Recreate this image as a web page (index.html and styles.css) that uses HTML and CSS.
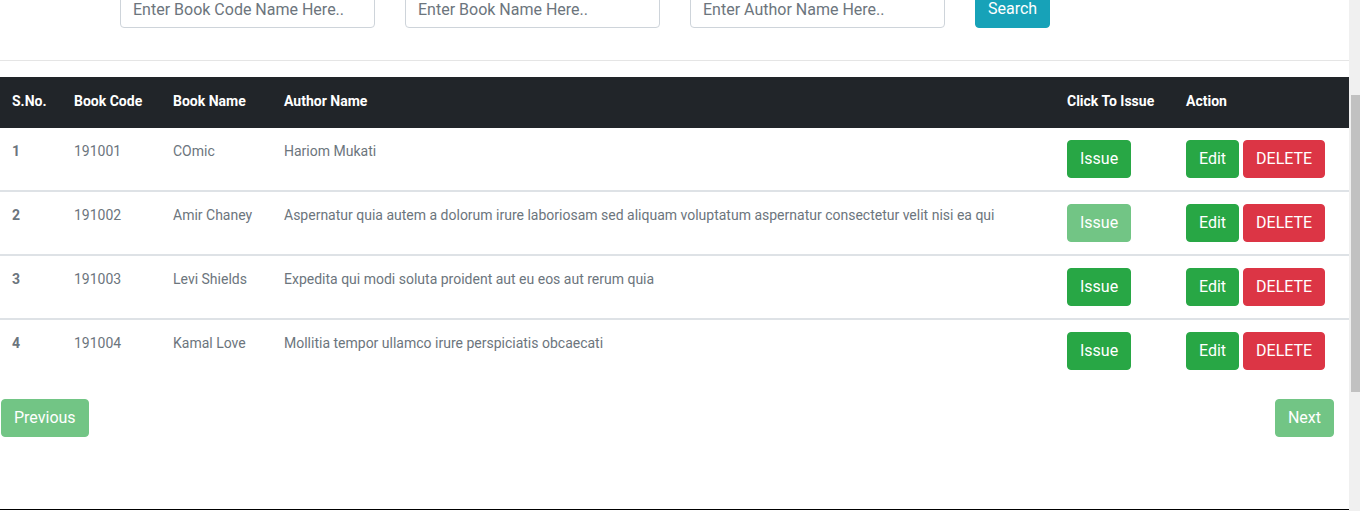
FILE: index.html
```html
<!DOCTYPE html>
<html lang="en">
<head>
<meta charset="utf-8">
<title>Books</title>
<link rel="stylesheet" href="styles.css">
</head>
<body>
<div class="page">
  <main class="main">
    <form class="search-row">
      <input class="form-control" type="text" placeholder="Enter Book Code Name Here..">
      <input class="form-control" type="text" placeholder="Enter Book Name Here..">
      <input class="form-control" type="text" placeholder="Enter Author Name Here..">
      <button class="btn btn-info" type="button">Search</button>
    </form>
    <hr class="divider">
    <table class="books">
      <colgroup>
        <col class="c-sno"><col class="c-code"><col class="c-name"><col class="c-author"><col class="c-issue"><col class="c-action">
      </colgroup>
      <thead>
        <tr>
          <th>S.No.</th><th>Book Code</th><th>Book Name</th><th>Author Name</th><th>Click To Issue</th><th>Action</th>
        </tr>
      </thead>
      <tbody>
        <tr>
          <th>1</th><td>191001</td><td>COmic</td><td>Hariom Mukati</td>
          <td><button class="btn btn-success" type="button">Issue</button></td>
          <td class="actions"><button class="btn btn-success" type="button">Edit</button><button class="btn btn-danger" type="button">DELETE</button></td>
        </tr>
        <tr>
          <th>2</th><td>191002</td><td>Amir Chaney</td><td>Aspernatur quia autem a dolorum irure laboriosam sed aliquam voluptatum aspernatur consectetur velit nisi ea qui</td>
          <td><button class="btn btn-success disabled" type="button">Issue</button></td>
          <td class="actions"><button class="btn btn-success" type="button">Edit</button><button class="btn btn-danger" type="button">DELETE</button></td>
        </tr>
        <tr>
          <th>3</th><td>191003</td><td>Levi Shields</td><td>Expedita qui modi soluta proident aut eu eos aut rerum quia</td>
          <td><button class="btn btn-success" type="button">Issue</button></td>
          <td class="actions"><button class="btn btn-success" type="button">Edit</button><button class="btn btn-danger" type="button">DELETE</button></td>
        </tr>
        <tr>
          <th>4</th><td>191004</td><td>Kamal Love</td><td>Mollitia tempor ullamco irure perspiciatis obcaecati</td>
          <td><button class="btn btn-success" type="button">Issue</button></td>
          <td class="actions"><button class="btn btn-success" type="button">Edit</button><button class="btn btn-danger" type="button">DELETE</button></td>
        </tr>
      </tbody>
    </table>
    <div class="pager">
      <button class="btn btn-success disabled" type="button">Previous</button>
      <button class="btn btn-success disabled" type="button">Next</button>
    </div>
  </main>
  <div class="scrollbar"><div class="thumb"></div></div>
</div>
</body>
</html>
```
FILE: styles.css
```css
* { box-sizing: border-box; }
html, body { margin: 0; padding: 0; background: #fff; }
body {
  font-family: Roboto, "Liberation Sans", Arial, sans-serif;
  font-size: 16px;
  line-height: 1.5;
  color: #212529;
  overflow: hidden;
}
.page {
  display: flex;
  height: 511px;
  overflow: hidden;
}
.main {
  flex: 1;
  height: 510px;
  border-bottom: 1px solid #000;
  overflow: hidden;
}
.scrollbar {
  width: 11px;
  height: 511px;
  background: #f0f0f0;
  padding-top: 95px;
  padding-left: 2px;
}
.thumb {
  width: 9px;
  height: 297px;
  background: #c1c1c1;
}
.search-row {
  display: flex;
  gap: 30px;
  margin: -10px 0 0 0;
  padding-left: 120px;
}
.form-control {
  width: 255px;
  height: 38px;
  padding: 6px 12px;
  font-family: inherit;
  font-size: 16px;
  line-height: 1.5;
  color: #495057;
  background: #fff;
  border: 1px solid #ced4da;
  border-radius: 4px;
  outline: none;
}
.form-control::placeholder { color: #6c757d; opacity: 1; }
.btn {
  display: inline-block;
  vertical-align: top;
  font-family: inherit;
  font-size: 16px;
  line-height: 24px;
  font-weight: 400;
  padding: 6px 12px;
  border: 1px solid transparent;
  border-radius: 4px;
  color: #fff;
  cursor: pointer;
}
.btn-info { background: #17a2b8; border-color: #17a2b8; }
.btn-success { background: #28a745; border-color: #28a745; }
.btn-danger { background: #dc3545; border-color: #dc3545; }
.btn.disabled { opacity: 0.65; }
.divider {
  margin: 32px 0 16px 0;
  border: 0;
  border-top: 1px solid rgba(0,0,0,0.1);
  height: 0;
}
.books {
  width: 100%;
  table-layout: fixed;
  border-collapse: collapse;
  font-size: 14px;
  line-height: 21px;
  color: #6c757d;
}
.c-sno { width: 62px; }
.c-code { width: 99px; }
.c-name { width: 111px; }
.c-author { width: 783px; }
.c-issue { width: 119px; }
.c-action { width: 175px; }
.books thead th {
  background: #212529;
  color: #fff;
  font-weight: 700;
  text-align: left;
  padding: 14px 12px 16px;
  height: 51px;
  white-space: nowrap;
}
.books tbody th, .books tbody td {
  text-align: left;
  vertical-align: top;
  padding: 12px;
  height: 62px;
  line-height: 23px;
}
.books tbody th { font-weight: 700; }
.books tbody tr + tr th, .books tbody tr + tr td { border-top: 2px solid #dee2e6; height: 64px; }
.actions { white-space: nowrap; }
.actions .btn + .btn { margin-left: 4px; }
.pager {
  display: flex;
  justify-content: space-between;
  margin-top: 16px;
  padding: 0 15px 0 1px;
}
```
